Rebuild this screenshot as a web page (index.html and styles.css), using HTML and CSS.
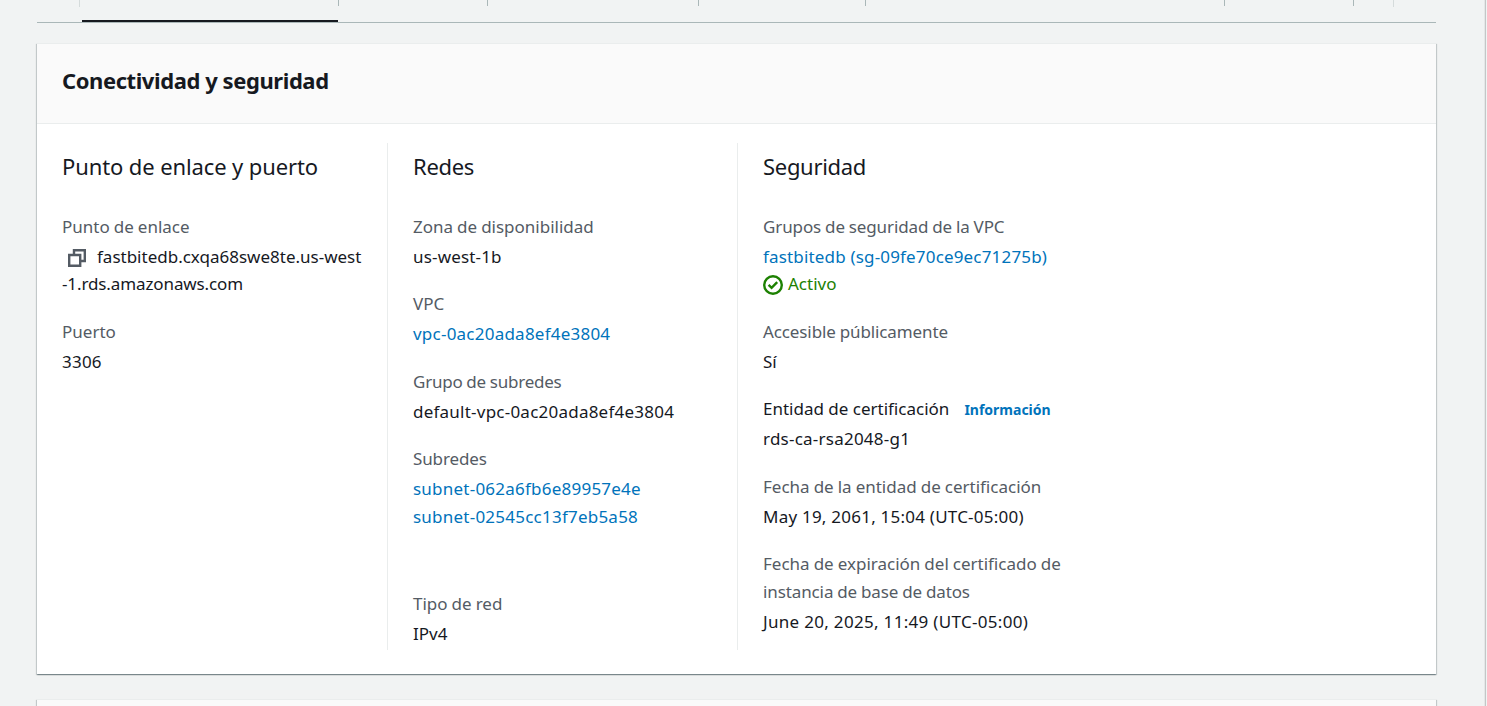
FILE: index.html
```html
<!DOCTYPE html>
<html lang="es">
<head>
<meta charset="utf-8">
<title>Conectividad y seguridad</title>
<link rel="stylesheet" href="styles.css">
</head>
<body>
<main class="page">
  <div class="tabs">
    <span class="tab tab-scroll tab-start"></span>
    <span class="tab tab-active"></span>
    <span class="tab tab-b"></span>
    <span class="tab tab-c"></span>
    <span class="tab tab-d"></span>
    <span class="tab tab-e"></span>
    <span class="tab tab-f"></span>
    <span class="tab tab-scroll tab-g"></span>
  </div>
  <section class="card">
    <header class="card-header"><h2>Conectividad y seguridad</h2></header>
    <div class="columns">
      <div class="column">
        <h3 class="long">Punto de enlace y puerto</h3>
        <dl>
          <div class="item">
            <dt>Punto de enlace</dt>
            <dd><svg class="copy" viewBox="0 0 18 18"><path d="M6 5V1.2h10.8V12H13M1.2 6h11v10.8h-11z"/></svg>fastbitedb.cxqa68swe8te.us-west<br><span class="tight">-1.rds.amazonaws.com</span></dd>
          </div>
          <div class="item"><dt>Puerto</dt><dd class="id">3306</dd></div>
        </dl>
      </div>
      <div class="column">
        <h3>Redes</h3>
        <dl>
          <div class="item"><dt>Zona de disponibilidad</dt><dd class="wide">us-west-1b</dd></div>
          <div class="item"><dt>VPC</dt><dd class="id"><a>vpc-0ac20ada8ef4e3804</a></dd></div>
          <div class="item"><dt class="tighter">Grupo de subredes</dt><dd class="id">default-vpc-0ac20ada8ef4e3804</dd></div>
          <div class="item item-subnets"><dt class="tight">Subredes</dt><dd class="id"><a>subnet-062a6fb6e89957e4e</a><br><a>subnet-02545cc13f7eb5a58</a></dd></div>
          <div class="item"><dt>Tipo de red</dt><dd>IPv4</dd></div>
        </dl>
      </div>
      <div class="column">
        <h3>Seguridad</h3>
        <dl>
          <div class="item">
            <dt class="tight">Grupos de seguridad de la VPC</dt>
            <dd><a class="wide">fastbitedb (sg-09fe70ce9ec71275b)</a><br><span class="status"><svg class="check" viewBox="0 0 20 20"><circle cx="10" cy="10" r="8.8"/><path d="M5.6 9.8l3 3 5.6-5.6"/></svg>Activo</span></dd>
          </div>
          <div class="item"><dt class="tight">Accesible públicamente</dt><dd>Sí</dd></div>
          <div class="item"><dt class="strong">Entidad de certificación<a class="info">Información</a></dt><dd class="id">rds-ca-rsa2048-g1</dd></div>
          <div class="item"><dt>Fecha de la entidad de certificación</dt><dd class="id">May 19, 2061, 15:04 (UTC-05:00)</dd></div>
          <div class="item"><dt>Fecha de expiración del certificado de<br><span class="tight">instancia de base de datos</span></dt><dd class="wider">June 20, 2025, 11:49 (UTC-05:00)</dd></div>
        </dl>
      </div>
    </div>
  </section>
  <section class="card card-next"></section>
</main>
</body>
</html>
```
FILE: styles.css
```css
* { box-sizing: border-box; }
body {
  margin: 0;
  background: #f1f3f3;
  color: #16191f;
  font: 17px/27.5px "Noto Sans", sans-serif;
}
.page { height: 706px; margin-right: 1px; padding: 0 49px 0 37px; overflow: hidden; border-right: 1px solid #c3c7c7; box-shadow: inset -1px 0 #e5e7e7; }
.tabs { display: flex; height: 23px; border-bottom: 1px solid #aab7b8; }
.tab { flex: none; height: 6px; border-right: 1px solid #aab7b8; }
.tab-scroll { height: 7px; border-color: #d5dbdb; }
.tab-start { width: 43px; }
.tab-active { position: relative; width: 259px; }
.tab-active::after { content: ""; position: absolute; left: 2px; top: 20px; width: 256px; height: 2px; background: #16191f; }
.tab-b { width: 149px; }
.tab-c { width: 211px; }
.tab-d { width: 167px; }
.tab-e { width: 359px; }
.tab-f { width: 129px; }
.tab-g { width: 40px; }
.card { height: 631px; margin-top: 20px; background: #fff; border-top: 1px solid #eaeded; box-shadow: 0 1px 1px 0 rgba(0,28,36,.3), 1px 1px 1px 0 rgba(0,28,36,.15), -1px 1px 1px 0 rgba(0,28,36,.15); }
.card-next { margin-top: 25px; background: #fafafa; }
.card-header { height: 80px; padding: 23px 25px 0; background: #fafafa; border-bottom: 1px solid #eaeded; }
h2, h3 { margin: 0; font-size: 22px; line-height: 27.5px; }
h2 { font-weight: 700; letter-spacing: -.42px; }
h3 { font-weight: 400; letter-spacing: -.3px; }
.long { letter-spacing: -.11px; }
.columns { display: grid; grid-template-columns: 351px 350px 350px; height: 507px; margin-top: 19px; }
.column { padding: 10px 25px 0; border-right: 1px solid #eaeded; }
.column:last-child { border: 0; }
dl { display: flex; flex-direction: column; gap: 20px; margin: 32px 0 0; }
dt { color: #545b64; white-space: nowrap; word-spacing: -.4px; }
dd { margin: 2.5px 0 0; white-space: nowrap; }
.strong { color: #16191f; word-spacing: 0; }
.item-subnets { margin-bottom: 40px; }
.tight { letter-spacing: -.11px; }
.tighter { letter-spacing: -.22px; }
.wide { letter-spacing: .17px; }
.id { letter-spacing: .23px; }
.wider { letter-spacing: .31px; }
a { color: #0073bb; }
.info { margin-left: 15px; font-size: 14px; line-height: 20px; font-weight: 700; }
.copy { width: 18px; height: 18px; margin: 0 11px 0 6px; vertical-align: -4px; fill: none; stroke: #545b64; stroke-width: 2.4; }
.status { color: #1d8102; }
.check { width: 20px; height: 20px; margin-right: 5px; vertical-align: -5px; fill: none; stroke: currentColor; stroke-width: 2.4; }
```
